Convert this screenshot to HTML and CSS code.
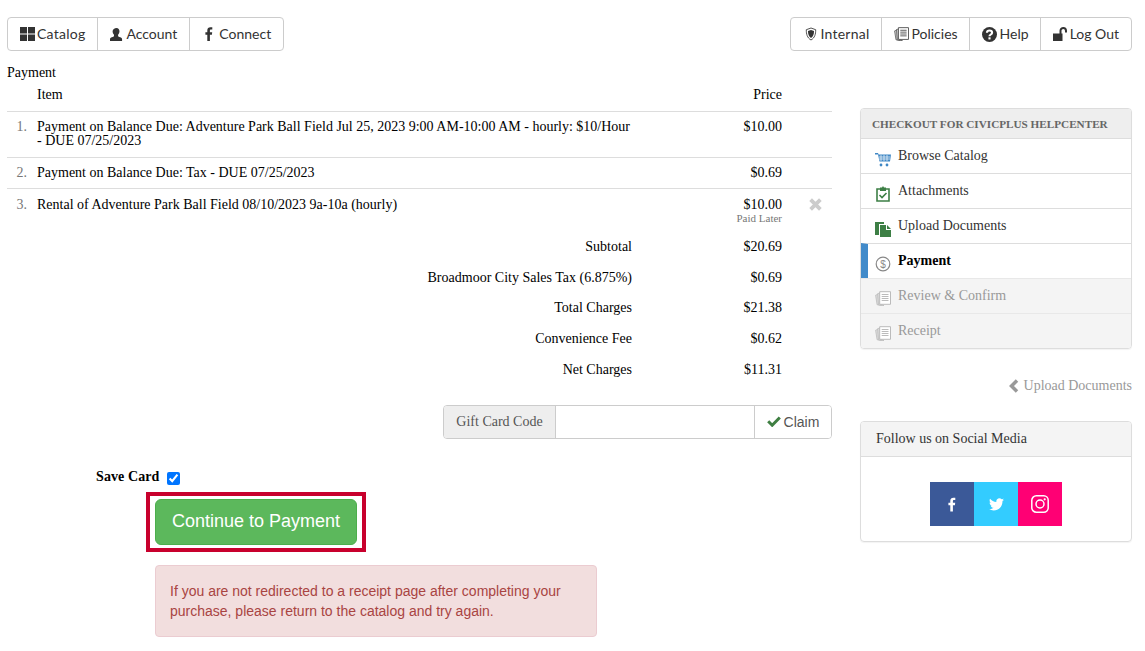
FILE: index.html
```html
<!DOCTYPE html>
<html lang="en">
<head>
    <meta charset="UTF-8">
    <title>Checkout - Payment</title>
    <link rel="stylesheet" href="styles.css">
</head>
<body>

<!-- shared icon -->
<svg class="sprite" width="0" height="0">
    <symbol id="pages-icon" viewBox="0 0 16 15">
        <path fill="var(--page-back)" stroke="currentColor" stroke-width=".8" d="M.6 4.200l3-1.200 1 10.500 2 1-4.500-.8z"/>
        <path fill="var(--page-back)" stroke="currentColor" stroke-width=".8" d="M2.600 2.700L5 2l1 11.500 3 1-5.500-.6z"/>
        <path fill="#fff" stroke="currentColor" d="M4.700.7h10.800v12.600H4.700z"/>
        <path fill="none" stroke="currentColor" d="M6.700 3.500h6.800M6.700 5.500h6.800M6.700 7.500h6.800M6.700 9.500h6.800"/>
    </symbol>
</svg>

<div class="top-nav">
    <div class="btn-group">
        <a class="nav-btn nav-wider">
            <svg viewBox="0 0 15 14" width="15" height="14"><path fill="#333" d="M0 0h7v6.600H0zM8 0h7v6.600H8zM0 7.600h7V14H0zM8 7.600h7V14H8z"/></svg>
            Catalog
        </a>
        <a class="nav-btn">
            <svg class="icon-account" viewBox="0 0 14 14" width="13" height="13"><path fill="#333" d="M7 0c2 0 3.200 1.500 3.200 3.500 0 1.500-.6 3-1.500 3.800v1.200c0 .6 1 .9 2.300 1.400 1.200.5 2 1 2 2.100V14H0v-2c0-1.100.8-1.600 2-2.100 1.300-.5 2.300-.8 2.300-1.400V7.300C3.400 6.500 2.800 5 2.800 3.500 2.800 1.500 5 0 7 0z"/></svg>
            Account
        </a>
        <a class="nav-btn">
            <svg class="icon-f" viewBox="0 0 8 14" width="8" height="14"><path fill="#333" d="M2.300 14V7.700H.4V5.300h1.900V3.500C2.300 1.300 3.500.2 5.400.2c.9 0 1.700.1 1.900.1v2.200H6.100c-1 0-1.200.5-1.200 1.200v1.600h2.300l-.3 2.400h-2V14z"/></svg>
            Connect
        </a>
    </div>
    <div class="btn-group">
        <a class="nav-btn nav-wider">
            <svg class="icon-shield" viewBox="0 0 14 16" width="12" height="14"><path fill="none" stroke="#333" d="M7 1l5.500 2c0 5-1 9.500-5.500 12C2.500 12.500 1.500 8 1.500 3z"/><path fill="#333" d="M7 3.200l3.500 1.300c0 3.500-.8 6.500-3.500 8.200-2.700-1.700-3.500-4.700-3.500-8.200z"/></svg>
            Internal
        </a>
        <a class="nav-btn nav-tight">
            <svg class="pages-dark" viewBox="0 0 16 15" width="15" height="14"><use href="#pages-icon"/></svg>
            Policies
        </a>
        <a class="nav-btn nav-tight">
            <svg class="icon-help" viewBox="0 0 14 14" width="15" height="15"><circle cx="7" cy="7" r="7" fill="#333"/><path fill="none" stroke="#fff" stroke-width="2" d="M4.600 5.400C4.700 4 5.700 3.300 7 3.300c1.400 0 2.400.8 2.400 2 0 1.700-2.400 1.700-2.400 3.400"/><rect x="6" y="9.600" width="2" height="2" fill="#fff"/></svg>
            Help
        </a>
        <a class="nav-btn">
            <svg class="icon-lock" viewBox="0 0 14 14" width="14" height="14"><path fill="#333" d="M0 6.500h9.500V14H0z"/><path fill="none" stroke="#333" stroke-width="2" d="M7.500 7V3.800C7.500 2.200 8.800 1 10.300 1S13 2.200 13 3.800V5.500"/></svg>
            Log Out
        </a>
    </div>
</div>

<div class="page">
    <div class="main">
        <div class="page-title">Payment</div>
        <div class="cart-head">
            <span class="col-item">Item</span>
            <span class="col-price">Price</span>
        </div>

        <div class="cart-row row-first">
            <span class="col-num">1.</span>
            <span class="col-item">Payment on Balance Due: Adventure Park Ball Field Jul 25, 2023 9:00 AM-10:00 AM - hourly: $10/Hour - DUE 07/25/2023</span>
            <span class="col-price">$10.00</span>
        </div>
        <div class="cart-row row-second">
            <span class="col-num">2.</span>
            <span class="col-item">Payment on Balance Due: Tax - DUE 07/25/2023</span>
            <span class="col-price">$0.69</span>
        </div>
        <div class="cart-row row-last">
            <span class="col-num">3.</span>
            <span class="col-item">Rental of Adventure Park Ball Field 08/10/2023 9a-10a (hourly)</span>
            <span class="col-price">$10.00<small class="paid-later">Paid Later</small></span>
            <svg class="remove-icon" viewBox="0 0 12 12" width="13" height="13"><path stroke="#ccc" stroke-width="3.500" d="M1.500 1.500l9 9M10.500 1.500l-9 9"/></svg>
        </div>

        <div class="totals">
            <div class="total-row"><span>Subtotal</span><span class="col-price">$20.69</span></div>
            <div class="total-row"><span>Broadmoor City Sales Tax (6.875%)</span><span class="col-price">$0.69</span></div>
            <div class="total-row"><span>Total Charges</span><span class="col-price">$21.38</span></div>
            <div class="total-row"><span>Convenience Fee</span><span class="col-price">$0.62</span></div>
            <div class="total-row"><span>Net Charges</span><span class="col-price">$11.31</span></div>
        </div>

        <div class="gift-card">
            <label class="gift-label" for="gift-code">Gift Card Code</label>
            <input class="gift-input" id="gift-code" type="text">
            <button class="gift-btn">
                <svg viewBox="0 0 14 11" width="14" height="11"><path fill="none" stroke="#3f7f42" stroke-width="3" d="M1.200 5.200l4 4L12.800 1.500"/></svg>
                Claim
            </button>
        </div>

        <div class="save-card">
            <label for="save">Save Card</label>
            <input id="save" type="checkbox" checked>
        </div>

        <div class="pay-highlight">
            <button class="pay-btn">Continue to Payment</button>
        </div>

        <div class="alert">If you are not redirected to a receipt page after completing your purchase, please return to the catalog and try again.</div>
    </div>

    <div class="side">
        <div class="panel">
            <div class="panel-head">CHECKOUT FOR CIVICPLUS HELPCENTER</div>
            <a class="step">
                <svg class="step-icon" viewBox="0 0 16 16" width="16" height="16"><path fill="#3f87c5" d="M0 2h3l.6 1.500H16l-1 7H4.500L3 3.500H0z"/><path stroke="#fff" stroke-width=".7" d="M6 4v6M9 4v6M12 4v6M4 6h11M4 8h11"/><circle cx="6" cy="14" r="1.400" fill="#3f87c5"/><circle cx="12" cy="14" r="1.400" fill="#3f87c5"/></svg>
                Browse Catalog
            </a>
            <a class="step">
                <svg class="step-icon" viewBox="0 0 16 16" width="16" height="16"><path fill="none" stroke="#3d7f45" stroke-width="1.600" d="M5 3H2v12h12V3h-3"/><path fill="#3d7f45" d="M5 1.500h2l1-1.500 1 1.500h2V5H5z"/><path fill="none" stroke="#3d7f45" stroke-width="1.600" d="M4.500 9l2.500 2.500 4.500-4.500"/></svg>
                Attachments
            </a>
            <a class="step">
                <svg class="step-icon" viewBox="0 0 16 16" width="16" height="16"><path fill="#3d7f45" d="M0 1h9v2H4v11H0z"/><path fill="#3d7f45" d="M5 4h6v5h5v7H5z"/><path fill="#3d7f45" d="M12 4l4 4h-4z"/></svg>
                Upload Documents
            </a>
            <a class="step step-active">
                <svg class="step-icon" viewBox="0 0 16 16" width="16" height="16"><circle cx="8" cy="8" r="6.800" fill="none" stroke="#888" stroke-width="1.200"/><text class="dollar" x="8" y="11.500" text-anchor="middle">$</text></svg>
                Payment
            </a>
            <a class="step step-off">
                <svg class="step-icon pages-off" viewBox="0 0 16 15" width="16" height="15"><use href="#pages-icon"/></svg>
                Review &amp; Confirm
            </a>
            <a class="step step-off">
                <svg class="step-icon pages-off" viewBox="0 0 16 15" width="16" height="15"><use href="#pages-icon"/></svg>
                Receipt
            </a>
        </div>

        <a class="prev-link">
            <svg viewBox="0 0 10 14" width="10" height="14"><path fill="none" stroke="#999" stroke-width="3.500" d="M8 1.500L2.500 7 8 12.500"/></svg>
            Upload Documents
        </a>

        <div class="panel social-panel">
            <div class="social-head">Follow us on Social Media</div>
            <div class="social-body">
                <a class="social social-fb">
                    <svg viewBox="0 0 8 14" width="8" height="15"><path fill="#fff" d="M2.300 14V7.700H.4V5.300h1.900V3.500C2.300 1.300 3.500.2 5.400.2c.9 0 1.700.1 1.900.1v2.200H6.100c-1 0-1.200.5-1.200 1.200v1.600h2.300l-.3 2.400h-2V14z"/></svg>
                </a>
                <a class="social social-tw">
                    <svg viewBox="0 0 24 20" width="15" height="13"><path fill="#fff" d="M24 2.400c-.9.400-1.800.7-2.800.8 1-.6 1.800-1.600 2.200-2.700-1 .6-2 1-3.100 1.200C19.300.7 18 0 16.600 0c-2.700 0-4.900 2.200-4.900 4.900 0 .4 0 .8.100 1.100C7.700 5.800 4.100 3.900 1.700.9 1.200 1.600 1 2.500 1 3.400c0 1.700.9 3.200 2.200 4.100-.8 0-1.600-.2-2.200-.6v.1c0 2.400 1.700 4.400 3.900 4.800-.4.100-.8.200-1.300.2-.3 0-.6 0-.9-.1.600 2 2.400 3.400 4.600 3.400-1.700 1.300-3.800 2.100-6.100 2.100-.4 0-.8 0-1.200-.1C2.200 18.700 4.800 19.500 7.500 19.500c9.100 0 14-7.500 14-14v-.6c1-.7 1.800-1.600 2.500-2.500z"/></svg>
                </a>
                <a class="social social-ig">
                    <svg viewBox="0 0 18 18" width="18" height="18"><rect x=".8" y=".8" width="16.400" height="16.400" rx="4.500" fill="none" stroke="#fff" stroke-width="1.500"/><circle cx="9" cy="9" r="4" fill="none" stroke="#fff" stroke-width="1.500"/><circle cx="13.700" cy="4.300" r="1.100" fill="#fff"/></svg>
                </a>
            </div>
        </div>
    </div>
</div>

</body>
</html>
```

FILE: styles.css
```css
body {
    font-family: "Liberation Serif", serif;
    font-size: 14px;
    line-height: 14px;
    color: #000;
    background-color: #fff;
    margin: 0;
    padding: 17px 13px 0 7px;
}
.sprite {
    position: absolute;
}
.top-nav {
    display: flex;
    justify-content: space-between;
}
.btn-group {
    display: flex;
    border: 1px solid #ccc;
    border-radius: 4px;
    height: 34px;
    box-sizing: border-box;
}
.nav-btn {
    display: flex;
    align-items: center;
    gap: 2px;
    padding: 0 12px;
    font-family: Lato, sans-serif;
    font-size: 14px;
    color: #333;
    border-left: 1px solid #ccc;
}
.nav-btn:first-child {
    border-left: none;
}
.nav-wider {
    letter-spacing: 0.25px;
}
.nav-tight {
    padding-right: 11px;
}
.icon-account {
    margin-right: 1px;
}
.icon-f {
    margin: 0 4px 0 3px;
}
.icon-shield {
    margin: 0 1px 0 2px;
}
.icon-help {
    margin-right: 1px;
}
.icon-lock {
    margin-right: 1px;
}
.pages-dark {
    color: #555;
    --page-back: #ccc;
}
.page {
    display: flex;
    justify-content: space-between;
}
.main {
    width: 825px;
    padding-top: 14px;
}
.page-title {
    height: 22px;
    padding-top: 1px;
    box-sizing: border-box;
}
.cart-head {
    display: flex;
    height: 25px;
    padding: 1px 0 0 30px;
    box-sizing: border-box;
    border-bottom: 1px solid #ddd;
    justify-content: space-between;
}
.cart-head .col-price {
    margin-right: 50px;
}
.col-item {
    display: block;
}
.col-price {
    width: 100px;
    text-align: right;
}
.cart-row {
    position: relative;
    display: flex;
    padding: 8px 50px 0 0;
    min-height: 23px;
    border-bottom: 1px solid #ddd;
}
.row-first {
    min-height: 37px;
}
.row-second {
    min-height: 22px;
}
.row-last {
    border-bottom: none;
    min-height: 31px;
    padding-top: 9px;
}
.cart-row .col-num {
    width: 30px;
    padding-right: 10px;
    box-sizing: border-box;
    text-align: right;
    color: #777;
}
.cart-row .col-item {
    width: 595px;
}
.cart-row .col-price {
    margin-left: auto;
}
.paid-later {
    display: block;
    font-size: 11px;
    line-height: 12px;
    color: #777;
}
.remove-icon {
    position: absolute;
    right: 10px;
    top: 9px;
}
.totals {
    padding-top: 10.9px;
}
.total-row {
    display: flex;
    justify-content: flex-end;
    height: 30.75px;
    padding-right: 50px;
}
.total-row .col-price {
    width: 150px;
}
.gift-card {
    display: flex;
    width: 389px;
    height: 34px;
    margin: 11px 0 0 436px;
    box-sizing: border-box;
    border: 1px solid #ccc;
    border-radius: 4px;
    overflow: hidden;
}
.gift-label {
    display: flex;
    align-items: center;
    justify-content: center;
    width: 112px;
    background-color: #eee;
    color: #555;
    border-right: 1px solid #ccc;
    box-sizing: border-box;
}
.gift-input {
    flex: 1;
    min-width: 0;
    border: none;
    outline: none;
    padding: 0 12px;
}
.gift-btn {
    display: flex;
    align-items: center;
    justify-content: center;
    gap: 3px;
    width: 77px;
    border: none;
    border-left: 1px solid #ccc;
    background-color: #fff;
    font-family: "Liberation Sans", sans-serif;
    font-size: 14px;
    color: #555;
    padding: 0;
}
.save-card {
    display: flex;
    align-items: center;
    margin: 30px 0 0 89px;
    height: 16px;
    font-weight: bold;
    letter-spacing: 0.1px;
}
.save-card input {
    width: 13px;
    height: 13px;
    margin: 3px 0 0 7px;
}
.pay-highlight {
    width: 220px;
    height: 60px;
    margin: 7px 0 0 139px;
    padding: 3px 5px;
    box-sizing: border-box;
    border: 4px solid #c8002d;
}
.pay-btn {
    width: 202px;
    height: 46px;
    background-color: #5cb85c;
    color: #fff;
    border: 1px solid #4cae4c;
    border-radius: 6px;
    font-family: "Liberation Sans", sans-serif;
    font-size: 18px;
}
.alert {
    width: 442px;
    height: 72px;
    margin: 13px 0 0 148px;
    padding: 15px 14px;
    box-sizing: border-box;
    background-color: #f2dede;
    border: 1px solid #ebccd1;
    border-radius: 4px;
    color: #a94442;
    font-family: "Liberation Sans", sans-serif;
    font-size: 14px;
    line-height: 20px;
}
.side {
    width: 272px;
    padding-top: 57px;
}
.panel {
    border: 1px solid #ddd;
    border-radius: 4px;
    box-shadow: 0 1px 1px rgba(0, 0, 0, 0.05);
    overflow: hidden;
}
.panel-head {
    height: 29px;
    padding: 8px 0 0 11px;
    box-sizing: border-box;
    background-color: #eee;
    font-size: 11.2px;
    font-weight: bold;
    color: #666;
    white-space: nowrap;
}
.step {
    display: flex;
    height: 35px;
    box-sizing: border-box;
    padding: 10px 0 0 14px;
    border-top: 1px solid #ddd;
    color: #333;
}
.step-icon {
    flex: none;
    margin: 2px 7px 0 0;
}
.step-active {
    border-left: 7px solid #428bca;
    padding-left: 7px;
    color: #000;
    font-weight: bold;
}
.dollar {
    font-size: 10px;
    font-family: "Liberation Sans", sans-serif;
    font-weight: normal;
    fill: #888;
}
.step-off {
    background-color: #f4f4f4;
    color: #999;
    border-top-color: #e8e8e8;
}
.pages-off {
    color: #bbb;
    --page-back: #ddd;
}
.prev-link {
    display: flex;
    justify-content: flex-end;
    align-items: center;
    gap: 5px;
    height: 14px;
    margin-top: 30px;
    color: #999;
}
.social-panel {
    margin-top: 28px;
}
.social-head {
    height: 35px;
    padding: 10px 0 0 15px;
    box-sizing: border-box;
    background-color: #f4f4f4;
    border-bottom: 1px solid #ddd;
    color: #333;
}
.social-body {
    display: flex;
    justify-content: center;
    height: 84px;
    padding-top: 25px;
    box-sizing: border-box;
}
.social {
    display: flex;
    align-items: center;
    justify-content: center;
    width: 44px;
    height: 44px;
}
.social-fb {
    background-color: #3b5998;
}
.social-tw {
    background-color: #33ccff;
}
.social-ig {
    background-color: #ff0074;
}
```
